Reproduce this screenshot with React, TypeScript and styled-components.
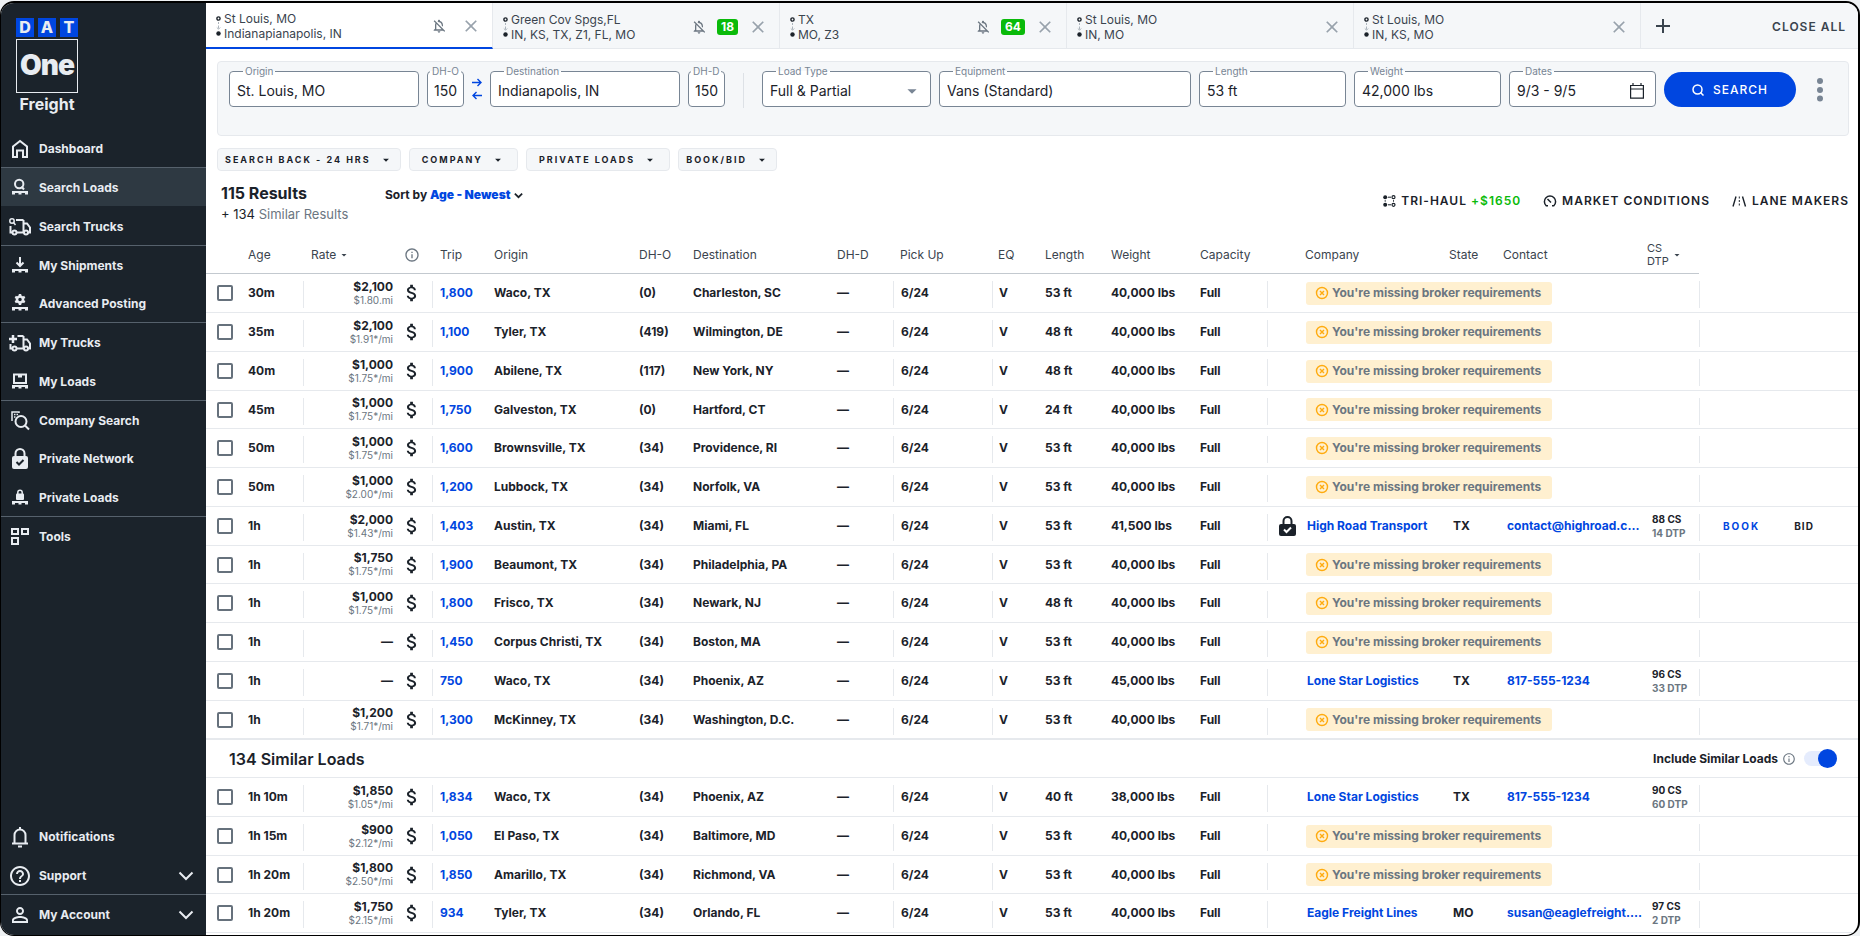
import React from 'react';
import styled, { createGlobalStyle, css } from 'styled-components';
import {
  MdAdd,
  MdArrowDropDown,
  MdAttachMoney,
  MdClose,
  MdHelpOutline,
  MdInfoOutline,
  MdOutlineNotificationsOff,
  MdPersonOutline,
} from 'react-icons/md';

const color = {
  ink: '#1b222a',
  text: '#3a444e',
  muted: '#6b7681',
  line: '#e6e9ed',
  panel: '#f5f7f9',
  blue: '#0046e0',
  green: '#0aba0a',
  side: '#1b232b',
  sideText: '#e8ecf1',
};

const GlobalStyle = createGlobalStyle`
  *, *::before, *::after { box-sizing: border-box; }
  body {
    margin: 0;
    background: #eef1f3;
    color: ${color.ink};
    font-family: Inter, "Liberation Sans", sans-serif;
    font-size: 12px;
    line-height: 16px;
  }
  button, input, select { font: inherit; color: inherit; }
  button { background: none; border: 0; padding: 0; cursor: pointer; }
  a { color: inherit; text-decoration: none; }
  svg { display: block; flex: none; }
`;

const Frame = styled.div`
  display: flex;
  min-height: calc(100vh - 1px);
  margin-top: 1px;
  border: 2px solid #000;
  border-left-width: 1px;
  border-bottom-width: 1px;
  border-radius: 14px;
  overflow: hidden;
  background: #fff;
`;

/* ---------- Sidebar ---------- */

const Sidebar = styled.aside`
  flex: none;
  display: flex;
  flex-direction: column;
  width: 205px;
  background: ${color.side};
  color: ${color.sideText};
`;

const Logo = styled.div`
  width: 62px;
  margin: 15px 0 14px 15px;
`;

const LogoTiles = styled.div`
  display: flex;
  justify-content: space-between;
`;

const LogoTile = styled.span`
  width: 18px;
  height: 19px;
  background: ${color.blue};
  font-size: 16px;
  line-height: 19px;
  font-weight: 800;
  text-align: center;
`;

const LogoOne = styled.div`
  height: 54px;
  margin-top: 2px;
  border: 1px solid ${color.sideText};
  font-size: 28px;
  line-height: 51px;
  font-weight: 900;
  letter-spacing: -1px;
  text-align: center;
`;

const LogoName = styled.div`
  font-size: 16px;
  line-height: 22px;
  font-weight: 700;
  text-align: center;
`;

const NavList = styled.nav<{ $bottom?: boolean }>`
  display: flex;
  flex-direction: column;
  ${(p) => p.$bottom && 'margin: auto 0 1px;'}
`;

const NavItem = styled.a<{ $active?: boolean; $divider?: boolean }>`
  display: flex;
  align-items: center;
  gap: 7px;
  height: 39px;
  padding: 2px 12px 0 7px;
  border-bottom: 1px solid ${(p) => (p.$divider ? '#56616c' : 'transparent')};
  background: ${(p) => (p.$active ? '#2e3942' : 'transparent')};
  background-clip: padding-box;
  font-weight: 700;

  &:nth-child(4n) { height: 38px; }
  span { flex: 1; }
`;

/* ---------- Tabs ---------- */

const Main = styled.main`
  flex: 1;
  min-width: 0;
  display: flex;
  flex-direction: column;
`;

const TabBar = styled.div`
  display: flex;
  height: 46px;
  background: ${color.panel};
`;

const Tab = styled.div<{ $active?: boolean }>`
  flex: 0 1 287px;
  display: flex;
  align-items: center;
  padding: 2px 11px 0 10px;
  border-right: 1px solid ${color.line};
  border-bottom: 1px solid ${color.line};
  color: ${color.text};
  ${(p) =>
    p.$active &&
    css`
      background: #fff;
      border-bottom: 2px solid ${color.blue};
    `}
`;

const TabText = styled.button`
  flex: 1;
  display: flex;
  align-items: center;
  gap: 3px;
  text-align: left;
  line-height: 15px;
`;

const TabTools = styled.div<{ $spaced?: boolean }>`
  display: flex;
  align-items: center;
  gap: ${(p) => (p.$spaced ? 14 : 10)}px;
  color: ${color.muted};
`;

const Count = styled.span`
  padding: 0 4px;
  border-radius: 3px;
  background: ${color.green};
  color: #fff;
  font-weight: 700;
`;

const CloseButton = styled.button`
  color: #98a2ac;
`;

const TabBarEnd = styled.div`
  flex: 1;
  display: flex;
  align-items: center;
  justify-content: space-between;
  padding: 0 12px 0 10px;
  border-bottom: 1px solid ${color.line};
  color: ${color.text};
`;

const CloseAll = styled.button`
  margin-top: 2px;
  font-weight: 600;
  letter-spacing: 1px;
`;

/* ---------- Search form ---------- */

const SearchPanel = styled.form`
  display: flex;
  align-items: flex-start;
  gap: 8px;
  height: 75px;
  margin: 12px 9px 0 11px;
  padding: 3px 25px 0 11px;
  border: 1px solid ${color.line};
  border-radius: 4px;
  background: ${color.panel};
`;

const FieldBox = styled.fieldset<{ $width: number; $narrow?: boolean }>`
  flex: ${(p) => (p.$narrow ? 'none' : `${p.$width} 1 ${p.$width}px`)};
  width: ${(p) => p.$width}px;
  min-width: 0;
  height: 42px;
  margin: 0;
  padding: 0 ${(p) => (p.$narrow ? 2 : 7)}px 2px;
  border: 1px solid #788594;
  border-radius: 4px;
  background: #fff;
  display: flex;
  align-items: center;

  legend {
    margin-left: ${(p) => (p.$narrow ? 0 : 6)}px;
    padding: 0 2px;
    color: #788594;
    font-size: 10px;
    line-height: 12px;
  }

  input, select {
    flex: 1;
    width: 100%;
    min-width: 0;
    height: 26px;
    padding: 0;
    border: 0;
    outline: 0;
    background: transparent;
    appearance: none;
    font-size: 14px;
    text-align: ${(p) => (p.$narrow ? 'center' : 'left')};
    color: ${color.ink};
  }
`;

const SwapButton = styled.button`
  align-self: flex-start;
  margin-top: 13px;
  color: ${color.blue};
`;

const FieldDivider = styled.span`
  width: 1px;
  height: 35px;
  margin: 8px 10px 0;
  background: #dde1e6;
`;

const SearchButton = styled.button`
  display: flex;
  align-items: center;
  justify-content: center;
  gap: 9px;
  width: 132px;
  height: 35px;
  margin-top: 7px;
  border-radius: 18px;
  background: ${color.blue};
  color: #fff;
  font-weight: 500;
  letter-spacing: 1px;
`;

const MoreButton = styled.button`
  margin: 13px 0 0 13px;
  color: #788594;
`;

const CalendarButton = styled.button`
  margin-right: 4px;
`;

/* ---------- Filters and result summary ---------- */

const Filters = styled.div`
  display: flex;
  gap: 8px;
  margin: 12px 11px 0;
`;

const FilterButton = styled.button<{ $wide?: boolean }>`
  display: flex;
  align-items: center;
  gap: 8px;
  height: 23px;
  padding: 0 ${(p) => (p.$wide ? 12 : 7)}px;
  border: 1px solid ${color.line};
  border-radius: 4px;
  background: ${color.panel};
  font-size: 9px;
  font-weight: 700;
  letter-spacing: 2px;
`;

const Summary = styled.div`
  display: flex;
  align-items: flex-start;
  height: 67px;
  padding: 12px 9px 0 15px;
`;

const Totals = styled.div`
  width: 164px;
  font-size: 13px;
  line-height: 20px;
  color: ${color.muted};

  h1 {
    margin: 0;
    font-size: 16px;
    line-height: 21px;
    font-weight: 700;
    color: ${color.ink};
  }
  b { font-weight: 400; color: ${color.ink}; }
`;

const SortButton = styled.button`
  display: flex;
  align-items: center;
  gap: 4px;
  margin-top: 4px;
  font-weight: 700;

  b { color: ${color.blue}; }
`;

const SummaryLinks = styled.div`
  flex: 1;
  display: flex;
  justify-content: flex-end;
  gap: 22px;
  margin-top: 10px;
`;

const SummaryLink = styled.a`
  display: flex;
  align-items: center;
  gap: 5px;
  font-weight: 600;
  letter-spacing: 1px;

  b { color: ${color.green}; font-weight: 600; }
`;

/* ---------- Table ---------- */

const Table = styled.table`
  width: 100%;
  table-layout: fixed;
  border-collapse: separate;
  border-spacing: 0;
`;

const HeadCell = styled.th<{ $pad?: number; $bare?: boolean }>`
  height: 36px;
  padding: 0 0 2px ${(p) => p.$pad || 0}px;
  border-bottom: 1px solid ${(p) => (p.$bare ? 'transparent' : '#c3c9cf')};
  color: ${color.text};
  font-weight: 400;
  text-align: left;
  white-space: nowrap;
`;

const HeadFlex = styled.span<{ $small?: boolean }>`
  display: flex;
  align-items: center;
  gap: 2px;
  ${(p) => p.$small && 'font-size: 11px; line-height: 13px;'}
`;

const Row = styled.tr`
  height: 39px;
  &:nth-child(4n) { height: 38px; }
`;

const Cell = styled.td<{ $pad?: number; $ruled?: boolean; $right?: boolean }>`
  padding: 0 ${(p) => (p.$right ? 8 : 0)}px 0 ${(p) => p.$pad || 0}px;
  border-bottom: 1px solid ${color.line};
  font-weight: 700;
  text-align: ${(p) => (p.$right ? 'right' : 'left')};
  white-space: nowrap;
  ${(p) =>
    p.$ruled &&
    css`
      background: linear-gradient(${color.line}, ${color.line}) 0 7px / 1px 27px no-repeat;
    `}
`;

const Check = styled.input`
  display: block;
  width: 16px;
  height: 16px;
  margin: 0;
  border: 2px solid #66717c;
  border-radius: 2px;
  background: #fff;
  appearance: none;
  &:checked { background: ${color.blue}; }
`;

const Rate = styled.div`
  line-height: 14px;
  small {
    display: block;
    font-size: 10px;
    line-height: 13px;
    font-weight: 400;
    color: ${color.muted};
  }
`;

const Score = styled.div`
  font-size: 10px;
  line-height: 14px;
  small {
    display: block;
    font-size: 10px;
    color: ${color.muted};
  }
`;

const BlueLink = styled.a`
  color: ${color.blue};
`;

const Missing = styled.span`
  display: flex;
  align-items: center;
  gap: 3px;
  width: 246px;
  height: 23px;
  padding: 0 9px;
  border-radius: 3px;
  background: #fff0d0;
  color: ${color.muted};
`;

const Actions = styled.div`
  display: flex;
  gap: 34px;
`;

const ActionButton = styled.button<{ $primary?: boolean }>`
  font-size: 10px;
  font-weight: 700;
  letter-spacing: ${(p) => (p.$primary ? 2 : 1)}px;
  color: ${(p) => (p.$primary ? color.blue : color.ink)};
`;

const SimilarCell = styled.td`
  padding: 0 21px 0 23px;
  border-top: 1px solid ${color.line};
  border-bottom: 1px solid ${color.line};
`;

const SimilarBar = styled.div`
  display: flex;
  align-items: center;
  justify-content: space-between;

  h2 {
    margin: 0;
    font-size: 16px;
    line-height: 20px;
    font-weight: 600;
  }
`;

const ToggleGroup = styled.label`
  display: flex;
  align-items: center;
  gap: 4px;
  font-weight: 700;
`;

const Toggle = styled.input`
  display: flex;
  align-items: center;
  justify-content: flex-end;
  width: 33px;
  height: 15px;
  margin: 0 0 0 4px;
  border-radius: 8px;
  background: #e5ecfd;
  appearance: none;

  &::before {
    content: '';
    width: 19px;
    height: 19px;
    border-radius: 50%;
    background: ${color.blue};
  }
  &:not(:checked) { justify-content: flex-start; }
`;

/* ---------- Drawings ---------- */

const Svg = ({ size = 24, children }: { size?: number; children: React.ReactNode }) => (
  <svg width={size} height={size} viewBox="0 0 24 24" fill="none" stroke="currentColor" strokeWidth="2" aria-hidden="true">
    {children}
  </svg>
);

const Pallet = () => (
  <path d="M4 15h16v3.500h-3V17h-3.500v1.500h-3V17H7v1.500H4z" fill="currentColor" stroke="none" />
);

const TruckWheels = () => (
  <>
    <path d="M9 17.500h7M15.500 17V5M15.500 8.500h3.500l3 4v5h-2" />
    <circle cx="6.500" cy="17.500" r="2" />
    <circle cx="18" cy="17.500" r="2" />
  </>
);

const icons: Record<string, React.ReactNode> = {
  home: <Svg><path d="M5 9.500 12 4l7 5.500V20h-4v-6.500H9V20H5z" /></Svg>,
  searchLoads: <Svg><circle cx="11.200" cy="8" r="4.200" /><path d="m13.500 10.500 2.500 3" /><Pallet /></Svg>,
  searchTrucks: (
    <Svg>
      <path d="M8 5h7.500M2.500 11v6.500H4" />
      <TruckWheels />
      <circle cx="4" cy="6" r="2.200" strokeWidth="1.500" />
      <path d="m5.500 7.500 2 2.500" strokeWidth="1.500" />
    </Svg>
  ),
  shipments: <Svg><path d="M12 3v8.500M8.500 8.500 12 12l3.500-3.500" /><Pallet /></Svg>,
  posting: (
    <Svg>
      <circle cx="12" cy="7.500" r="3" strokeWidth="2.500" />
      <path d="M12 2v2M12 11v2M7.200 4.800 9 5.800M15 9.200l1.800 1M7.200 10.200 9 9.200M15 5.800l1.800-1" strokeWidth="2.500" />
      <Pallet />
    </Svg>
  ),
  trucks: <Svg><path d="M9.500 5h6M2.500 13v4.500H4" /><TruckWheels /><path d="M5 4v8M1 8h8" strokeWidth="2.500" /></Svg>,
  loads: <Svg><path d="M6 4.500h12v8.500H6z" /><path d="M12 4.500v3" strokeWidth="4" /><Pallet /></Svg>,
  company: (
    <Svg>
      <path d="M11 4V3H4v9" strokeWidth="1.500" />
      <path d="M6 5.500h1.500M8.500 5.500H10M6 8h1.500" strokeWidth="1.500" />
      <circle cx="13" cy="12.500" r="5.500" />
      <path d="m17 16.500 4 4" />
    </Svg>
  ),
  network: (
    <Svg>
      <path d="M7.500 10V6.500a4.500 4.500 0 0 1 9 0V10" />
      <rect x="4" y="9" width="16" height="13" rx="2" fill="currentColor" stroke="none" />
      <path d="m8.500 15 2.500 2.500 4.500-4.500" stroke="#1b232b" />
    </Svg>
  ),
  privateLoads: (
    <Svg>
      <path d="M9.800 8V6.500a2.200 2.200 0 0 1 4.400 0V8" strokeWidth="1.500" />
      <rect x="8" y="7.500" width="8" height="6.500" rx="1" fill="currentColor" stroke="none" />
      <Pallet />
    </Svg>
  ),
  tools: <Svg><path d="M4 4h6v5H4zM14 4h6v5h-6zM4 13h6v6H4z" /></Svg>,
  bell: <Svg><path d="M4 18.500h16M6.500 18.500V10a5.500 5.500 0 0 1 11 0v8.500M12 2v2.500M10 21.500h4" /></Svg>,
  help: <MdHelpOutline size={24} />,
  person: <MdPersonOutline size={24} />,
};

const ChevronDown = ({ width }: { width: number }) => (
  <svg width={width} height={width} viewBox="0 0 16 16" fill="none" stroke="currentColor" strokeWidth={width > 12 ? 2 : 3} aria-hidden="true">
    <path d="m1.500 4.500 6.500 6.500 6.500-6.500" />
  </svg>
);

const RouteMark = () => (
  <svg width="5" height="20" viewBox="0 0 5 20" fill="none" stroke={color.ink} aria-hidden="true">
    <circle cx="2.500" cy="2.500" r="1.600" strokeWidth="1.400" />
    <path d="M2.500 6v2M2.500 9.500v3M.8 11.500l1.700 1.700 1.700-1.700" stroke="#98a2ac" strokeWidth=".8" />
    <circle cx="2.500" cy="17.500" r="2.200" fill={color.ink} stroke="none" />
  </svg>
);

const SwapMark = () => (
  <svg width="10" height="22" viewBox="0 0 10 22" fill="none" stroke="currentColor" strokeWidth="1.400" aria-hidden="true">
    <path d="M0 4.500h9M5.500 1 9 4.500 5.500 8M10 17.500H1M4.500 14 1 17.500 4.500 21" />
  </svg>
);

const CalendarMark = () => (
  <svg width="14" height="16" viewBox="0 0 14 16" fill="none" stroke="currentColor" aria-hidden="true">
    <path d="M.6 2.500h12.800v12.700H.6zM.6 6h12.800M3 0v2.500M11 0v2.500" strokeWidth="1.200" />
  </svg>
);

const LensMark = () => (
  <svg width="12" height="12" viewBox="0 0 12 12" fill="none" stroke="currentColor" strokeWidth="1.500" aria-hidden="true">
    <circle cx="5.500" cy="5.500" r="4.500" />
    <path d="m8.500 8.500 3 3" />
  </svg>
);

const DotsMark = () => (
  <svg width="6" height="24" viewBox="0 0 6 24" fill="currentColor" aria-hidden="true">
    <circle cx="3" cy="3" r="3" />
    <circle cx="3" cy="12" r="3" />
    <circle cx="3" cy="20.500" r="3" />
  </svg>
);

const TriHaulMark = () => (
  <svg width="13" height="12" viewBox="0 0 13 12" fill="none" stroke="currentColor" aria-hidden="true">
    <circle cx="2.200" cy="2.200" r="2" fill="currentColor" stroke="none" />
    <circle cx="2.200" cy="9.800" r="2" fill="currentColor" stroke="none" />
    <circle cx="10.500" cy="2.200" r="1.500" strokeWidth="1.200" />
    <circle cx="10.500" cy="9.800" r="1.500" strokeWidth="1.200" />
    <path d="M5 2.200h3M5 9.800h3M2.200 5.200v1.500M10.500 5.200v1.500" />
  </svg>
);

const GaugeMark = () => (
  <svg width="14" height="12" viewBox="0 0 14 12" fill="none" stroke="currentColor" strokeWidth="1.500" aria-hidden="true">
    <path d="M5 10.800H3.200A5.600 5.600 0 1 1 10.800 10.800H9M8 7.500 4.500 4" />
  </svg>
);

const LaneMark = () => (
  <svg width="15" height="11" viewBox="0 0 15 11" fill="none" stroke="currentColor" strokeWidth="1.400" aria-hidden="true">
    <path d="M4 .5 1 10.500M10.500.5l3 10" />
    <path d="M7.300.5v10" strokeWidth="1" strokeDasharray="2 1.500" />
  </svg>
);

const LockMark = () => (
  <svg width="17" height="20" viewBox="0 0 17 20" fill="none" stroke={color.ink} strokeWidth="2" aria-hidden="true">
    <path d="M4.500 9V5a4 4 0 0 1 8 0v4" />
    <rect x="0" y="8" width="17" height="12" rx="2" fill={color.ink} stroke="none" />
    <path d="m5 13.500 2.500 2.500 4.500-4.500" stroke="#fff" />
  </svg>
);

const WarnMark = () => (
  <svg width="14" height="14" viewBox="0 0 14 14" fill="none" stroke="#ffab0f" strokeWidth="1.400" aria-hidden="true">
    <circle cx="7" cy="7" r="5.500" />
    <path d="m5 5 4 4M9 5 5 9" />
  </svg>
);

/* ---------- Data ---------- */

type Nav = { icon: string; label: string; active?: boolean; divider?: boolean; expandable?: boolean };

const topNav: Nav[] = [
  { icon: 'home', label: 'Dashboard', divider: true },
  { icon: 'searchLoads', label: 'Search Loads', active: true },
  { icon: 'searchTrucks', label: 'Search Trucks', divider: true },
  { icon: 'shipments', label: 'My Shipments' },
  { icon: 'posting', label: 'Advanced Posting', divider: true },
  { icon: 'trucks', label: 'My Trucks' },
  { icon: 'loads', label: 'My Loads', divider: true },
  { icon: 'company', label: 'Company Search' },
  { icon: 'network', label: 'Private Network' },
  { icon: 'privateLoads', label: 'Private Loads', divider: true },
  { icon: 'tools', label: 'Tools' },
];

const bottomNav: Nav[] = [
  { icon: 'bell', label: 'Notifications' },
  { icon: 'help', label: 'Support', divider: true, expandable: true },
  { icon: 'person', label: 'My Account', expandable: true },
];

const tabs = [
  { from: 'St Louis, MO', to: 'Indianapianapolis, IN', muted: true, active: true },
  { from: 'Green Cov Spgs,FL', to: 'IN, KS, TX, Z1, FL, MO', muted: true, count: 18 },
  { from: 'TX', to: 'MO, Z3', muted: true, count: 64 },
  { from: 'St Louis, MO', to: 'IN, MO' },
  { from: 'St Louis, MO', to: 'IN, KS, MO' },
];

const filters = [
  { label: 'SEARCH BACK - 24 HRS' },
  { label: 'COMPANY', wide: true },
  { label: 'PRIVATE LOADS', wide: true },
  { label: 'BOOK/BID' },
];

type Company = { name: string; state: string; contact: string; cs: string; dtp: string; locked?: boolean; bookable?: boolean };
type Load = {
  age: string;
  rate?: string;
  perMile?: string;
  trip: string;
  origin: string;
  dho: string;
  destination: string;
  length: string;
  weight: string;
  company?: Company;
};

const load = (
  age: string, rate: string, perMile: string, trip: string, origin: string, dho: string,
  destination: string, length = '53 ft', weight = '40,000 lbs', company?: Company,
): Load => ({ age, rate, perMile, trip, origin, dho, destination, length, weight, company });

const loneStar = (cs: string, dtp: string): Company => ({
  name: 'Lone Star Logistics', state: 'TX', contact: '817-555-1234', cs, dtp,
});

const results: Load[] = [
  load('30m', '$2,100', '$1.80.mi', '1,800', 'Waco, TX', '(0)', 'Charleston, SC'),
  load('35m', '$2,100', '$1.91*/mi', '1,100', 'Tyler, TX', '(419)', 'Wilmington, DE', '48 ft'),
  load('40m', '$1,000', '$1.75*/mi', '1,900', 'Abilene, TX', '(117)', 'New York, NY', '48 ft'),
  load('45m', '$1,000', '$1.75*/mi', '1,750', 'Galveston, TX', '(0)', 'Hartford, CT', '24 ft'),
  load('50m', '$1,000', '$1.75*/mi', '1,600', 'Brownsville, TX', '(34)', 'Providence, RI'),
  load('50m', '$1,000', '$2.00*/mi', '1,200', 'Lubbock, TX', '(34)', 'Norfolk, VA'),
  load('1h', '$2,000', '$1.43*/mi', '1,403', 'Austin, TX', '(34)', 'Miami, FL', '53 ft', '41,500 lbs', {
    name: 'High Road Transport', state: 'TX', contact: 'contact@highroad.c...', cs: '88', dtp: '14', locked: true, bookable: true,
  }),
  load('1h', '$1,750', '$1.75*/mi', '1,900', 'Beaumont, TX', '(34)', 'Philadelphia, PA'),
  load('1h', '$1,000', '$1.75*/mi', '1,800', 'Frisco, TX', '(34)', 'Newark, NJ', '48 ft'),
  load('1h', '', '', '1,450', 'Corpus Christi, TX', '(34)', 'Boston, MA'),
  load('1h', '', '', '750', 'Waco, TX', '(34)', 'Phoenix, AZ', '53 ft', '45,000 lbs', loneStar('96', '33')),
  load('1h', '$1,200', '$1.71*/mi', '1,300', 'McKinney, TX', '(34)', 'Washington, D.C.'),
];

const similar: Load[] = [
  load('1h 10m', '$1,850', '$1.05*/mi', '1,834', 'Waco, TX', '(34)', 'Phoenix, AZ', '40 ft', '38,000 lbs', loneStar('90', '60')),
  load('1h 15m', '$900', '$2.12*/mi', '1,050', 'El Paso, TX', '(34)', 'Baltimore, MD'),
  load('1h 20m', '$1,800', '$2.50*/mi', '1,850', 'Amarillo, TX', '(34)', 'Richmond, VA'),
  load('1h 20m', '$1,750', '$2.15*/mi', '934', 'Tyler, TX', '(34)', 'Orlando, FL', '53 ft', '40,000 lbs', {
    name: 'Eagle Freight Lines', state: 'MO', contact: 'susan@eaglefreight....', cs: '97', dtp: '2',
  }),
];

const columnWidths = [42, 55, 98, 31, 62, 145, 54, 144, 56, 99, 53, 66, 89, 67, 38, 144, 54, 144, 52, 159];

/* ---------- Parts ---------- */

const NavLinks = ({ items, bottom }: { items: Nav[]; bottom?: boolean }) => (
  <NavList $bottom={bottom}>
    {items.map((item) => (
      <NavItem key={item.label} href="#" $active={item.active} $divider={item.divider}>
        {icons[item.icon]}
        <span>{item.label}</span>
        {item.expandable && <ChevronDown width={16} />}
      </NavItem>
    ))}
  </NavList>
);

type FieldProps = { id: string; label: string; width: number; value: string; narrow?: boolean; children?: React.ReactNode };

const Field = ({ id, label, width, value, narrow, children }: FieldProps) => (
  <FieldBox $width={width} $narrow={narrow}>
    <legend><label htmlFor={id}>{label}</label></legend>
    <input id={id} defaultValue={value} />
    {children}
  </FieldBox>
);

const LoadRow = ({ item }: { item: Load }) => (
  <Row>
    <Cell $pad={11}><Check type="checkbox" aria-label={`Select load ${item.origin} to ${item.destination}`} /></Cell>
    <Cell>{item.age}</Cell>
    <Cell $ruled $right>
      {item.rate ? <Rate>{item.rate}<small>{item.perMile}</small></Rate> : '—'}
    </Cell>
    <Cell><MdAttachMoney size={22} /></Cell>
    <Cell $ruled $pad={8}><BlueLink href="#">{item.trip}</BlueLink></Cell>
    <Cell>{item.origin}</Cell>
    <Cell>{item.dho}</Cell>
    <Cell>{item.destination}</Cell>
    <Cell>—</Cell>
    <Cell $ruled $pad={8}>6/24</Cell>
    <Cell $ruled $pad={7}>V</Cell>
    <Cell>{item.length}</Cell>
    <Cell>{item.weight}</Cell>
    <Cell>Full</Cell>
    <Cell $ruled $pad={12}>{item.company?.locked && <LockMark />}</Cell>
    {item.company ? (
      <>
        <Cell $pad={2}><BlueLink href="#">{item.company.name}</BlueLink></Cell>
        <Cell $pad={4}>{item.company.state}</Cell>
        <Cell $pad={4}><BlueLink href="#">{item.company.contact}</BlueLink></Cell>
        <Cell $pad={5}><Score>{item.company.cs} CS<small>{item.company.dtp} DTP</small></Score></Cell>
      </>
    ) : (
      <>
        <Cell colSpan={3} $pad={1}><Missing><WarnMark />You're missing broker requirements</Missing></Cell>
        <Cell />
      </>
    )}
    <Cell $ruled $pad={24}>
      {item.company?.bookable && (
        <Actions>
          <ActionButton $primary>BOOK</ActionButton>
          <ActionButton>BID</ActionButton>
        </Actions>
      )}
    </Cell>
  </Row>
);

export default function App() {
  return (
    <>
      <GlobalStyle />
      <Frame>
        <Sidebar>
          <Logo>
            <LogoTiles>
              <LogoTile>D</LogoTile>
              <LogoTile>A</LogoTile>
              <LogoTile>T</LogoTile>
            </LogoTiles>
            <LogoOne>One</LogoOne>
            <LogoName>Freight</LogoName>
          </Logo>
          <NavLinks items={topNav} />
          <NavLinks items={bottomNav} bottom />
        </Sidebar>

        <Main>
          <TabBar>
            {tabs.map((tab, i) => (
              <Tab key={i} $active={tab.active}>
                <TabText>
                  <RouteMark />
                  <span>{tab.from}<br />{tab.to}</span>
                </TabText>
                <TabTools $spaced={!tab.count}>
                  {tab.muted && <MdOutlineNotificationsOff size={16} />}
                  {tab.count && <Count>{tab.count}</Count>}
                  <CloseButton aria-label="Close tab"><MdClose size={20} /></CloseButton>
                </TabTools>
              </Tab>
            ))}
            <TabBarEnd>
              <button aria-label="New tab"><MdAdd size={24} /></button>
              <CloseAll>CLOSE ALL</CloseAll>
            </TabBarEnd>
          </TabBar>

          <SearchPanel onSubmit={(e) => e.preventDefault()}>
            <Field id="origin" label="Origin" width={190} value="St. Louis, MO" />
            <Field id="dho" label="DH-O" width={37} value="150" narrow />
            <SwapButton type="button" aria-label="Swap origin and destination"><SwapMark /></SwapButton>
            <Field id="destination" label="Destination" width={190} value="Indianapolis, IN" />
            <Field id="dhd" label="DH-D" width={37} value="150" narrow />
            <FieldDivider />
            <FieldBox $width={169}>
              <legend><label htmlFor="loadType">Load Type</label></legend>
              <select id="loadType" defaultValue="Full & Partial">
                <option>Full &amp; Partial</option>
              </select>
              <MdArrowDropDown size={22} color="#788594" />
            </FieldBox>
            <Field id="equipment" label="Equipment" width={252} value="Vans (Standard)" />
            <Field id="length" label="Length" width={147} value="53 ft" />
            <Field id="weight" label="Weight" width={147} value="42,000 lbs" />
            <Field id="dates" label="Dates" width={147} value="9/3 - 9/5">
              <CalendarButton type="button" aria-label="Open calendar"><CalendarMark /></CalendarButton>
            </Field>
            <SearchButton type="submit"><LensMark />SEARCH</SearchButton>
            <MoreButton type="button" aria-label="More options"><DotsMark /></MoreButton>
          </SearchPanel>

          <Filters>
            {filters.map(({ label, wide }) => (
              <FilterButton key={label} $wide={wide}>{label}<MdArrowDropDown size={14} /></FilterButton>
            ))}
          </Filters>

          <Summary>
            <Totals>
              <h1>115 Results</h1>
              <b>+ 134</b> Similar Results
            </Totals>
            <SortButton>
              <span>Sort by <b>Age - Newest</b></span>
              <ChevronDown width={9} />
            </SortButton>
            <SummaryLinks>
              <SummaryLink href="#"><TriHaulMark /><span>TRI-HAUL <b>+$1650</b></span></SummaryLink>
              <SummaryLink href="#"><GaugeMark />MARKET CONDITIONS</SummaryLink>
              <SummaryLink href="#"><LaneMark />LANE MAKERS</SummaryLink>
            </SummaryLinks>
          </Summary>

          <Table>
            <colgroup>
              {columnWidths.map((w, i) => <col key={i} width={w} />)}
            </colgroup>
            <thead>
              <tr>
                <HeadCell />
                <HeadCell>Age</HeadCell>
                <HeadCell $pad={8}><HeadFlex>Rate<MdArrowDropDown size={12} /></HeadFlex></HeadCell>
                <HeadCell $pad={3}><MdInfoOutline size={16} color={color.muted} /></HeadCell>
                <HeadCell $pad={8}>Trip</HeadCell>
                <HeadCell>Origin</HeadCell>
                <HeadCell>DH-O</HeadCell>
                <HeadCell>Destination</HeadCell>
                <HeadCell>DH-D</HeadCell>
                <HeadCell $pad={7}>Pick Up</HeadCell>
                <HeadCell $pad={6}>EQ</HeadCell>
                <HeadCell>Length</HeadCell>
                <HeadCell>Weight</HeadCell>
                <HeadCell>Capacity</HeadCell>
                <HeadCell />
                <HeadCell>Company</HeadCell>
                <HeadCell>State</HeadCell>
                <HeadCell>Contact</HeadCell>
                <HeadCell><HeadFlex $small><span>CS<br />DTP</span><MdArrowDropDown size={12} /></HeadFlex></HeadCell>
                <HeadCell $bare />
              </tr>
            </thead>
            <tbody>
              {results.map((item, i) => <LoadRow key={i} item={item} />)}
              <Row>
                <SimilarCell colSpan={20}>
                  <SimilarBar>
                    <h2>134 Similar Loads</h2>
                    <ToggleGroup>
                      Include Similar Loads
                      <MdInfoOutline size={14} color={color.muted} />
                      <Toggle type="checkbox" role="switch" defaultChecked />
                    </ToggleGroup>
                  </SimilarBar>
                </SimilarCell>
              </Row>
              {similar.map((item, i) => <LoadRow key={i} item={item} />)}
            </tbody>
          </Table>
        </Main>
      </Frame>
    </>
  );
}
